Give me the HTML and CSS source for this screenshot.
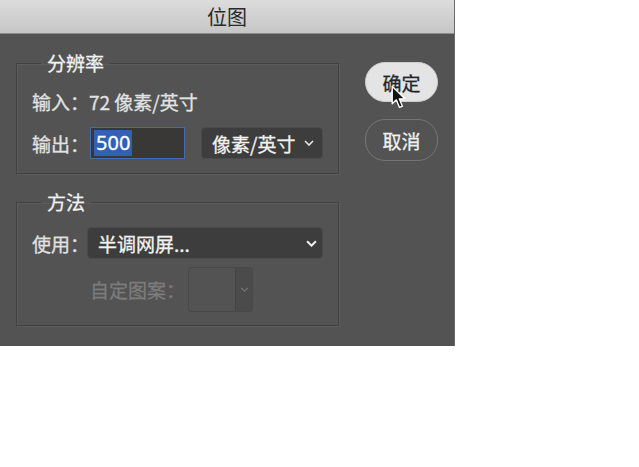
FILE: index.html
```html
<!DOCTYPE html>
<html lang="zh-CN">
<head>
  <meta charset="UTF-8" />
  <meta name="viewport" content="width=device-width, initial-scale=1.0"/>
  <title>位图</title>
  <link rel="stylesheet" href="styles.css">
</head>
<body>
  <div class="dialog">
    <div class="titlebar">位图</div>

    <div class="content">
      <div class="panels">
        <fieldset class="group res">
          <legend>分辨率</legend>
          <div class="row">输入：72 像素/英寸</div>
          <div class="row">
            <span class="label">输出：</span>
            <div class="field"><span class="sel">500</span></div>
            <div class="select unit">
              <span>像素/英寸</span>
              <svg class="chev" width="10" height="6" viewBox="0 0 10 6"><path d="M1 1 L5 5 L9 1" fill="none" stroke="#e8e8e8" stroke-width="1.6"/></svg>
            </div>
          </div>
        </fieldset>

        <fieldset class="group method">
          <legend>方法</legend>
          <div class="row">
            <span class="label">使用：</span>
            <div class="select wide">
              <span>半调网屏...</span>
              <svg class="chev" width="11" height="7" viewBox="0 0 10 6"><path d="M1 1 L5 5 L9 1" fill="none" stroke="#f0f0f0" stroke-width="1.8"/></svg>
            </div>
          </div>
          <div class="row pattern-row">
            <span class="label off">自定图案：</span>
            <div class="pattern">
              <div class="swatch"></div>
              <div class="drop">
                <svg width="9" height="5" viewBox="0 0 10 6"><path d="M1 1 L5 5 L9 1" fill="none" stroke="#777" stroke-width="1.4"/></svg>
              </div>
            </div>
          </div>
        </fieldset>
      </div>

      <div class="buttons">
        <button class="btn ok">确定</button>
        <button class="btn cancel">取消</button>
        <svg class="cursor" width="15" height="24" viewBox="0 0 13 21">
          <path d="M1 1 L1 16.5 L4.6 13 L7.4 19.6 L9.9 18.5 L7.2 12.1 L12 12.1 Z" fill="#111" stroke="#fff" stroke-width="1.2" stroke-linejoin="round"/>
        </svg>
      </div>
    </div>
  </div>
</body>
</html>
```

FILE: styles.css
```css
body {
  margin: 0;
  background: #fff;
  font-family: "Noto Sans CJK SC", "Noto Sans", sans-serif;
}

.dialog {
  width: 454px;
  height: 346px;
  background: #535353;
  border-right: 1px solid #6a6a6a;
  display: flex;
  flex-direction: column;
}

.titlebar {
  height: 33px;
  line-height: 33px;
  text-align: center;
  font-size: 20px;
  color: #2a2a2a;
  background: linear-gradient(#dcdcdc, #c6c6c6);
  border-bottom: 1px solid #8c8c8c;
}

.content {
  display: flex;
  padding: 17px 0 0 16px;
  gap: 26px;
}

.panels {
  width: 323px;
  display: flex;
  flex-direction: column;
  gap: 16px;
}

.group {
  margin: 0;
  border: 1px solid #414141;
  box-shadow: inset 1px 1px 0 #5c5c5c, 1px 1px 0 #5c5c5c;
  display: flex;
  flex-direction: column;
  color: #e2e2e2;
  font-size: 19px;
  -webkit-text-stroke: 0.3px currentColor;
}

.group legend {
  margin-left: 9px;
  padding: 0 6px;
  height: 24px;
  line-height: 24px;
  font-size: 19px;
  color: #f2f2f2;
}

.res {
  padding: 10px 14px 14px 15px;
  gap: 10px;
}

.method {
  padding: 13px 14px 13px 15px;
  gap: 8px;
}

.row {
  height: 32px;
  display: flex;
  align-items: center;
  white-space: nowrap;
}

.label {
  width: 55px;
}

.field {
  width: 90px;
  height: 30px;
  margin-left: 3px;
  border: 1px solid #3f6fb2;
  background: #3a3836;
  display: flex;
  align-items: center;
  padding-left: 3px;
}

.field .sel {
  background: #2f62b4;
  color: #fff;
  font-family: "Noto Sans", sans-serif;
  font-size: 20px;
  line-height: 26px;
  padding: 0 2px;
}

.select {
  height: 30px;
  background: #3d3d3d;
  border: 1px solid #4b4b4b;
  border-radius: 4px;
  display: flex;
  align-items: center;
  justify-content: space-between;
  padding: 0 8px 0 10px;
  color: #f2f2f2;
}

.unit {
  width: 102px;
  margin-left: 16px;
}

.wide {
  width: 219px;
  margin-left: 0;
  padding-right: 5px;
}

.pattern-row {
  height: 45px;
  padding-left: 58px;
}

.label.off {
  width: auto;
  color: #7c7c7c;
}

.pattern {
  margin-left: 3px;
  width: 63px;
  height: 43px;
  border: 1px solid #484848;
  border-radius: 3px;
  display: flex;
}

.swatch {
  width: 46px;
  border-right: 1px solid #444;
}

.drop {
  flex: 1;
  background: #4b4b4b;
  display: flex;
  align-items: center;
  justify-content: center;
}

.buttons {
  position: relative;
  padding-top: 11px;
  display: flex;
  flex-direction: column;
  gap: 17px;
}

.btn {
  width: 73px;
  height: 40px;
  border-radius: 20px;
  font-family: "Noto Sans CJK SC", sans-serif;
  font-size: 19px;
  padding: 0;
  -webkit-text-stroke: 0.3px currentColor;
}

.ok {
  background: #e4e4e4;
  border: 1px solid #cfcfcf;
  color: #262626;
}

.cancel {
  height: 42px;
  background: transparent;
  border: 1.5px solid #767676;
  color: #f2f2f2;
}

.cursor {
  position: absolute;
  left: 26px;
  top: 34px;
}
```
